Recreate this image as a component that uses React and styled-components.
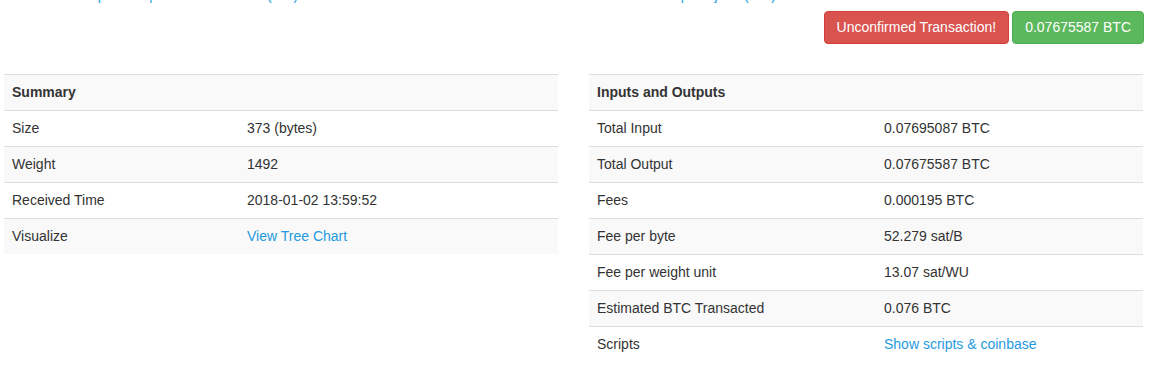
import React from "react";
import styled, { createGlobalStyle } from "styled-components";

const GlobalStyle = createGlobalStyle`
  body {
    margin: 0;
    background: #fff;
    font-family: "Liberation Sans", Arial, Helvetica, sans-serif;
    font-size: 14px;
    color: #333;
  }
`;

const Page = styled.div`
  width: 1170px;
  padding: 0 26px 0 4px;
  box-sizing: border-box;
`;

const TopStrip = styled.div`
  height: 4px;
  overflow: hidden;
`;

const TopLinks = styled.div`
  margin-top: -15px;
  padding-left: 12px;
  line-height: 20px;
  white-space: nowrap;
  color: #229ee0;
`;

const Toolbar = styled.div`
  display: flex;
  justify-content: flex-end;
  gap: 3px;
  margin-top: 7px;
`;

const Badge = styled.span`
  display: inline-block;
  padding: 6px 12px;
  line-height: 19px;
  font-size: 14px;
  color: #fff;
  border-radius: 4px;
  border: 1px solid ${(p) => (p.variant === "danger" ? "#d43f3a" : "#4cae4c")};
  background: ${(p) => (p.variant === "danger" ? "#d9534f" : "#5cb85c")};
`;

const Columns = styled.div`
  display: grid;
  grid-template-columns: 554px 554px;
  column-gap: 31px;
  margin-top: 30px;
  align-items: start;
`;

const Table = styled.div`
  display: flex;
  flex-direction: column;
`;

const Row = styled.div`
  display: grid;
  grid-template-columns: ${(p) => p.labelWidth}px 1fr;
  border-top: 1px solid #ddd;
  &:nth-child(odd) {
    background: #f9f9f9;
  }
`;

const Cell = styled.div`
  padding: 8px;
  line-height: 19px;
  font-weight: ${(p) => (p.head ? "bold" : "normal")};
  white-space: nowrap;
`;

const Link = styled.a`
  color: #1f9ade;
  text-decoration: none;
`;

const summary = [
  ["Size", "373 (bytes)"],
  ["Weight", "1492"],
  ["Received Time", "2018-01-02 13:59:52"],
  ["Visualize", <Link href="#">View Tree Chart</Link>],
];

const io = [
  ["Total Input", "0.07695087 BTC"],
  ["Total Output", "0.07675587 BTC"],
  ["Fees", "0.000195 BTC"],
  ["Fee per byte", "52.279 sat/B"],
  ["Fee per weight unit", "13.07 sat/WU"],
  ["Estimated BTC Transacted", "0.076 BTC"],
  ["Scripts", <Link href="#">Show scripts &amp; coinbase</Link>],
];

function InfoTable({ title, rows, labelWidth }) {
  return (
    <Table>
      <Row labelWidth={labelWidth}>
        <Cell head>{title}</Cell>
        <Cell />
      </Row>
      {rows.map(([label, value]) => (
        <Row key={label} labelWidth={labelWidth}>
          <Cell>{label}</Cell>
          <Cell>{value}</Cell>
        </Row>
      ))}
    </Table>
  );
}

export default function App() {
  return (
    <>
      <GlobalStyle />
      <Page>
        <TopStrip>
          <TopLinks>
            Back to mempool list | Transaction hash (txid): 4e1f0d8c2b7a6e5f3c9d0a1b2e4f7c8d6a5b3e2f1c0d9e8a7b | raw json (hex)
          </TopLinks>
        </TopStrip>
        <Toolbar>
          <Badge variant="danger">Unconfirmed Transaction!</Badge>
          <Badge variant="success">0.07675587 BTC</Badge>
        </Toolbar>
        <Columns>
          <InfoTable title="Summary" rows={summary} labelWidth={235} />
          <InfoTable title="Inputs and Outputs" rows={io} labelWidth={287} />
        </Columns>
      </Page>
    </>
  );
}
